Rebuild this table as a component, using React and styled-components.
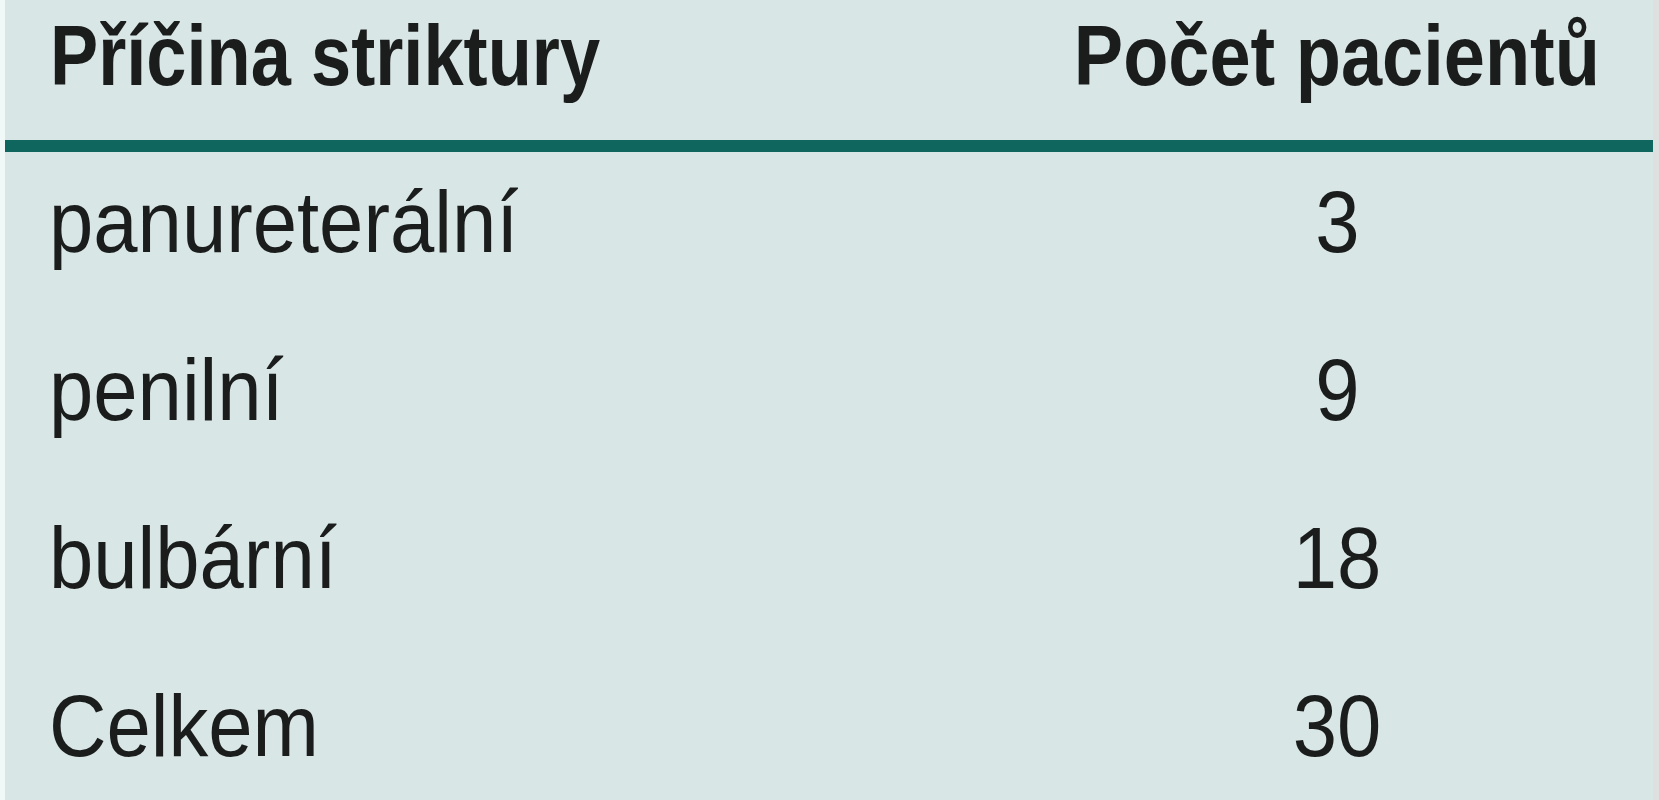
import React from "react";
import styled, { createGlobalStyle } from "styled-components";

const rows = [
  { cause: "panureterální", count: 3 },
  { cause: "penilní", count: 9 },
  { cause: "bulbární", count: 18 },
  { cause: "Celkem", count: 30 },
];

const GlobalStyle = createGlobalStyle`
  html, body {
    margin: 0;
    padding: 0;
    background: #f1f8f8;
  }
  body {
    font-family: "Liberation Sans", Arial, sans-serif;
    color: #1b1d1d;
  }
`;

const Page = styled.div`
  display: flex;
  height: 800px;
  overflow: hidden;
  padding-left: 5px;
`;

const Panel = styled.div`
  flex: 1;
  background: #d9e6e6;
  border-right: 6px solid #dedfdf;
`;

const Table = styled.table`
  width: 100%;
  border-collapse: collapse;
  table-layout: fixed;
`;

const NumberCol = styled.col`
  width: 632px;
`;

const HeadCell = styled.th`
  font-weight: 700;
  font-size: 86px;
  line-height: 100px;
  padding: 5px 0 35px;
  padding-left: ${(props) => (props.$align === "left" ? "45px" : "0")};
  text-align: ${(props) => props.$align};
  border-bottom: 12px solid #0e665f;
  white-space: nowrap;
`;

const Cell = styled.td`
  font-weight: 400;
  font-size: 88px;
  line-height: 100px;
  padding: 20px 0 48px;
  padding-left: ${(props) => (props.$align === "left" ? "44px" : "0")};
  text-align: ${(props) => props.$align};
  white-space: nowrap;
`;

// the source font is a narrow grotesque, so squeeze the Arial-metric face
const Narrow = styled.span`
  display: inline-block;
  transform: scaleX(${(props) => props.$squeeze});
  transform-origin: ${(props) => (props.$align === "left" ? "left" : "center")} center;
`;

const App = () => {
  return (
    <>
      <GlobalStyle />
      <Page>
        <Panel>
          <Table>
            <colgroup>
              <col />
              <NumberCol />
            </colgroup>
            <thead>
              <tr>
                <HeadCell $align="left">
                  <Narrow $align="left" $squeeze={0.84}>
                    Příčina striktury
                  </Narrow>
                </HeadCell>
                <HeadCell $align="center">
                  <Narrow $align="center" $squeeze={0.86}>
                    Počet pacientů
                  </Narrow>
                </HeadCell>
              </tr>
            </thead>
            <tbody>
              {rows.map((row) => (
                <tr key={row.cause}>
                  <Cell $align="left">
                    <Narrow $align="left" $squeeze={0.905}>
                      {row.cause}
                    </Narrow>
                  </Cell>
                  <Cell $align="center">
                    <Narrow $align="center" $squeeze={0.905}>
                      {row.count}
                    </Narrow>
                  </Cell>
                </tr>
              ))}
            </tbody>
          </Table>
        </Panel>
      </Page>
    </>
  );
};

export default App;
